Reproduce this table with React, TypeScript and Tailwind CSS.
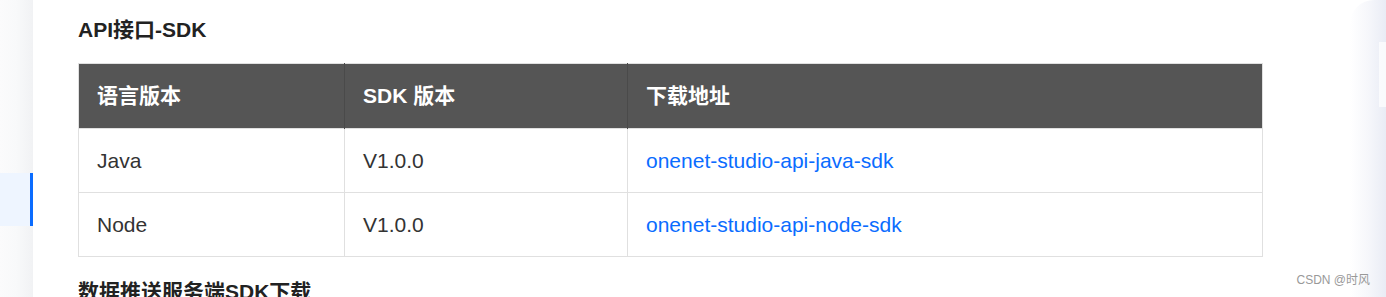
import React from 'react';

const sdkRows = [
  { lang: 'Java', version: 'V1.0.0', link: 'onenet-studio-api-java-sdk' },
  { lang: 'Node', version: 'V1.0.0', link: 'onenet-studio-api-node-sdk' },
];

export default function App() {
  return (
    <div
      className="relative flex h-[297px] w-full overflow-hidden bg-white text-[#333]"
      style={{ fontFamily: '"Liberation Sans", "Noto Sans CJK SC", sans-serif' }}
    >
      {/* left nav strip */}
      <aside className="flex w-[33px] shrink-0 flex-col bg-gradient-to-r from-[#fbfbfc] via-[#f8f9fa] to-[#f1f2f4]">
        <div className="h-[173px]" />
        <div className="h-[53px] border-r-[3px] border-[#0a6cff] bg-[#eef5ff]" />
      </aside>

      {/* main content */}
      <main className="flex-1 pl-[45px] pt-[16px]">
        <h2 className="h-[28px] text-[21px] font-bold leading-[28px] text-[#222]">API接口-SDK</h2>

        <table className="mt-[19px] w-[1185px] border-collapse border border-[#e0e0e0] text-[21px]">
          <thead>
            <tr className="h-[65px] bg-[#555] text-white">
              <th className="w-[266px] border-r border-[#4a4a4a] pl-[18px] text-left font-bold">语言版本</th>
              <th className="w-[283px] border-r border-[#4a4a4a] pl-[18px] text-left font-bold">SDK 版本</th>
              <th className="pl-[18px] text-left font-bold">下载地址</th>
            </tr>
          </thead>
          <tbody>
            {sdkRows.map((row) => (
              <tr key={row.lang} className="h-[64px] border-t border-[#e0e0e0]">
                <td className="border-r border-[#e0e0e0] pl-[18px]">{row.lang}</td>
                <td className="border-r border-[#e0e0e0] pl-[18px]">{row.version}</td>
                <td className="pl-[18px]">
                  <a href="#" className="text-[#0a6cff]">{row.link}</a>
                </td>
              </tr>
            ))}
          </tbody>
        </table>

        <h2 className="mt-[21px] h-[28px] text-[21px] font-bold leading-[28px] text-[#222]">数据推送服务端SDK下载</h2>
      </main>

      {/* right floating panel */}
      <aside className="w-[36px] shrink-0 pt-[0px]">
        <div className="flex h-full rounded-tl-[24px] bg-gradient-to-r from-white via-[#f6f7fb] to-[#e9ecf5]">
          <div className="ml-[29px] mt-[42px] h-[65px] flex-1 bg-white/70" />
        </div>
      </aside>

      <span className="absolute bottom-[8px] right-[16px] text-[12px] text-[#999]">CSDN @时风</span>
    </div>
  );
}
